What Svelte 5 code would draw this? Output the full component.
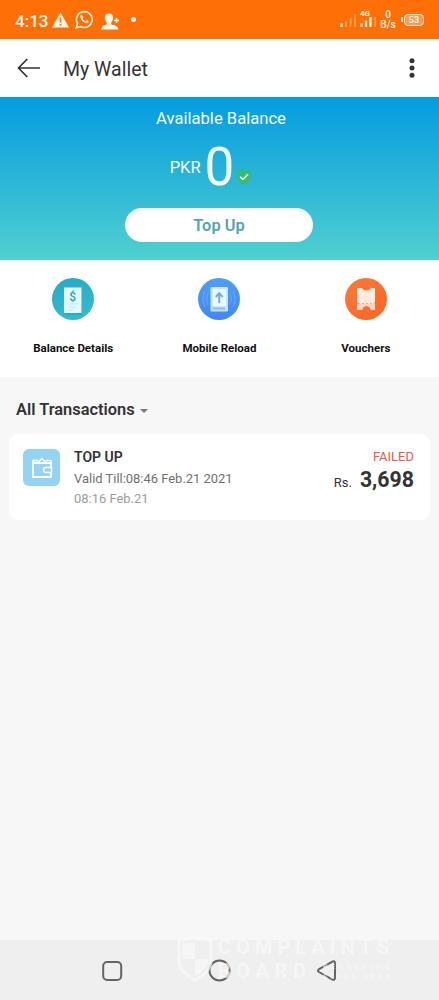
<script>
	const actions = [
	  { id: "balance", label: "Balance Details" },
	  { id: "reload", label: "Mobile Reload" },
	  { id: "vouchers", label: "Vouchers" },
	];

	const transactions = [
	  { title: "TOP UP", valid: "Valid Till:08:46 Feb.21 2021", date: "08:16 Feb.21", status: "FAILED", amount: "3,698" },
	];
</script>

<div class="screen">
  <div class="status">
	<span class="clock">4:13</span>
	<svg class="warn" width="17" height="16" viewBox="0 0 17 16">
	  <path d="M8.5 0.5 17 15.5H0Z" fill="#fff5e6" />
	  <path d="M8.5 5.5v5M8.5 11.8v1.8" stroke="#ff6f08" stroke-width="1.7" />
	</svg>
	<svg class="whatsapp" width="19" height="19" viewBox="0 0 19 19">
	  <path d="M1.2 17.8 2.5 13.5A7.9 7.9 0 1 1 5.6 16.5Z" fill="none" stroke="#fff0dc" stroke-width="1.6" />
	  <path d="M6.6 4.8 5.4 6c-.8 3 3.7 7.7 6.8 7.3l1.7-1.5-2.2-1.7-1.2 1.1c-1.3-.5-2.4-1.6-2.9-2.8l.9-1.2Z" fill="#fff0dc" />
	</svg>
	<svg class="person" width="19" height="17" viewBox="0 0 19 17">
	  <path d="M3.8 4.6C3.8-.9 12.2-.9 12.2 4.6c0 2-.7 3.7-2 5v2c2.600.6 6.800.8 7 4.900H.3c.6-3.900 3.500-4.300 5.500-4.900v-2C4.500 8.300 3.800 6.600 3.800 4.600Z" fill="#fff5e6" />
	  <path d="M15.5 5v5M13 7.5h5" stroke="#fff5e6" stroke-width="1.4" />
	</svg>
	<span class="dot"></span>
	<div class="signals">
	  <svg width="17" height="16" viewBox="0 0 17 16">
		<path d="M1.5 11.5v3.5" stroke="#fff0dc" stroke-width="2.5" />
		<path d="M6 9v6M10.7 6v9M15 2v13" stroke="#ff9d51" stroke-width="1.8" />
	  </svg>
	  <div class="mobile">
		<span class="net">4G</span>
		<svg width="17" height="10" viewBox="0 0 17 10">
		  <path d="M1.5 6.5V10M6 3.5V10M10.5 0V10" stroke="#fff0dc" stroke-width="2.3" />
		  <path d="M15 0v10" stroke="#ff9345" stroke-width="1.8" />
		</svg>
	  </div>
	  <div class="rate"><span>0</span><span>B/s</span></div>
	  <i class="nub"></i>
	  <div class="battery"><span>53</span></div>
	</div>
  </div>

  <header>
	<svg class="back" width="24" height="20" viewBox="0 0 24 20">
	  <path d="M10.3 1 1.5 10l8.8 9M1.5 10H23" fill="none" stroke="#333" stroke-width="1.7" />
	</svg>
	<h1>My Wallet</h1>
	<svg class="more" width="6" height="20" viewBox="0 0 6 20">
	  <circle cx="3" cy="2.7" r="2.5" /><circle cx="3" cy="10" r="2.5" /><circle cx="3" cy="17.3" r="2.5" />
	</svg>
  </header>

  <section class="balance">
	<p class="caption">Available Balance</p>
	<div class="total">
	  <span class="currency">PKR</span>
	  <span class="value">0</span>
	  <svg width="14" height="16" viewBox="0 0 14 16">
		<path d="M7 0.3 13.8 2.5V9c0 3-3 5.2-6.8 6.7C3.2 14.2.2 12 .2 9V2.5Z" fill="#35bd72" />
		<path d="M3 7.8 5.8 10.4 11 5.4" fill="none" stroke="#fff" stroke-width="1.5" />
	  </svg>
	</div>
	<button>Top Up</button>
  </section>

  <nav class="actions">
	{#each actions as action}
	  <div class="action">
		<svg width="42" height="42" viewBox="0 0 42 42">
		  {#if action.id === "balance"}
			<defs><linearGradient id="teal" x1="0" y1="0" x2="0.3" y2="1"><stop stop-color="#24a9c5" /><stop offset="1" stop-color="#35b9ce" /></linearGradient></defs>
			<circle cx="21" cy="21" r="21" fill="url(#teal)" />
			<path d="M13 11h17v26H13Z" fill="#1c9dbb" opacity="0.5" />
			<path d="M12 9.5h17.5V35H12Z" fill="#e5f8fb" />
			<text x="20.7" y="23" text-anchor="middle" font-size="12" font-weight="500" fill="#26a5c0">$</text>
			<path d="M16 26h10M16 29h8M16 32h5" stroke="#c5e7ee" stroke-width="1" />
		  {:else if action.id === "reload"}
			<defs><linearGradient id="blue" x1="0" y1="0" x2="0" y2="1"><stop stop-color="#4ba0f3" /><stop offset="1" stop-color="#4386f5" /></linearGradient></defs>
			<circle cx="21" cy="21" r="21" fill="url(#blue)" />
			<path d="M10 15q-3 6 0 12M7 13q-4 8 0 16M32 15q3 6 0 12M35 13q4 8 0 16" fill="none" stroke="#62adf8" />
			<rect x="12.5" y="9" width="17.5" height="24.5" rx="1" fill="#c5e4fd" />
			<path d="M14.5 11h13.5v17H14.5Z" fill="#edf8ff" />
			<path d="M21.2 25v-9M17.7 19l3.5-3.8 3.5 3.8" fill="none" stroke="#65b4ed" stroke-width="2" />
			<path d="M15 30.5h12" stroke="#89bff5" stroke-width="2" />
		  {:else}
			<defs><linearGradient id="orange" x1="0" y1="0" x2="1" y2="1"><stop stop-color="#fa7a3b" /><stop offset="1" stop-color="#fc6423" /></linearGradient></defs>
			<circle cx="21" cy="21" r="21" fill="url(#orange)" />
			<path d="M12 10h5q1 2.500 4.500 2.500t4.500-2.500h4v14l-1 1 1 1v6h-4q-1-4-4.500-4T17 32h-5v-6l1-1-1-1Z" fill="#ffeadf" />
			<path d="M12 26h18v6h-4q-1-4-4.500-4T17 32h-5Z" fill="#ffd6c3" />
			<path d="M13 25.5h17" stroke="#fba982" stroke-width="1.2" stroke-dasharray="2 2" />
		  {/if}
		</svg>
		<span>{action.label}</span>
	  </div>
	{/each}
  </nav>

  <main>
	<h2>All Transactions <i></i></h2>
	{#each transactions as item}
	  <article>
		<div class="wallet">
		  <svg width="22" height="22" viewBox="0 0 22 22" fill="none" stroke="#fff" stroke-width="1.8">
			<path d="M20 10V6H2v14h18v-4" />
			<path d="M2 6V3.500h5M7 5.500l4-4 4 4M15 3.500h5V6" stroke-width="1.5" />
			<path d="M20.500 10.500H15a2.500 2.500 0 0 0 0 5h5.500Z" stroke-width="1.5" />
		  </svg>
		</div>
		<div class="details">
		  <strong>{item.title}</strong>
		  <span class="valid">{item.valid}</span>
		  <span class="date">{item.date}</span>
		</div>
		<div class="result">
		  <span class="failed">{item.status}</span>
		  <div class="price"><span>Rs.</span><b>{item.amount}</b></div>
		</div>
	  </article>
	{/each}
  </main>

  <footer>
	<svg class="keys" width="439" height="60" viewBox="0 0 439 60" fill="none" stroke="#646464" stroke-width="2">
	  <rect x="103.2" y="22" width="18" height="18" rx="4" />
	  <circle cx="219.5" cy="30.5" r="10" />
	  <path d="M319 29.2 332 21.8q3-1.500 3 1.500v14.500q0 3-3 1.500L319 32q-2-1.400 0-2.800Z" />
	</svg>
	<svg class="mark" width="230" height="62" viewBox="0 -6 230 62">
	  <path d="M2 5q16-6 32 0v20q0 11-16 19Q2 36 2 25Z" fill="none" stroke="#fafafa" stroke-width="3" />
	  <path d="M5 7h13v16H5ZM18 23h13q1 10-13 17Z" fill="#fafafa" />
	  <text x="41" y="18" textLength="171">COMPLAINTS</text>
	  <text x="41" y="42" textLength="88">BOARD</text>
	  <g class="small"><text x="146" y="33" textLength="66">RESOLVING</text><text x="146" y="42.5" textLength="66">SINCE 2004</text></g>
	</svg>
  </footer>
</div>

<style>
	:global(body) {
	  margin: 0;
	}

	.screen {
	  width: 439px;
	  height: 1000px;
	  display: flex;
	  flex-direction: column;
	  background: #f7f7f7;
	  color: #333;
	  font-family: Roboto, sans-serif;
	  overflow: hidden;
	}

	p, h1, h2 {
	  margin: 0;
	}

	svg {
	  display: block;
	  flex-shrink: 0;
	}

	.status {
	  height: 39px;
	  box-sizing: border-box;
	  display: flex;
	  align-items: center;
	  padding: 0 15px;
	  background: #ff6f08;
	  color: #fff5e6;
	}

	.clock {
	  width: 37px;
	  font-size: 17px;
	  font-weight: 500;
	  padding-top: 2px;
	}

	.whatsapp {
	  margin-left: 6px;
	}

	.person {
	  margin: 3px 0 0 7px;
	}

	.dot {
	  width: 5px;
	  height: 5px;
	  margin-left: 11px;
	  border-radius: 50%;
	  background: #fff5e6;
	}

	.signals {
	  margin-left: auto;
	  display: flex;
	  align-items: center;
	}

	.mobile {
	  margin: 0 3px 2px 3px;
	}

	.net {
	  display: block;
	  font-size: 8px;
	  font-weight: 700;
	  line-height: 7px;
	}

	.rate {
	  width: 16px;
	  display: flex;
	  flex-direction: column;
	  align-items: center;
	  padding-top: 1px;
	  font-size: 10px;
	  line-height: 10px;
	  font-weight: 500;
	}

	.nub {
	  width: 2px;
	  height: 5px;
	  margin-left: 5px;
	  background: #fff0dc;
	}

	.battery {
	  width: 18px;
	  height: 10px;
	  margin-left: 1px;
	  border: 1px solid #fff0dc;
	  border-radius: 4px;
	  background: #ff9a50;
	  font-size: 9px;
	  line-height: 11px;
	  font-weight: 700;
	  text-align: center;
	}

	header {
	  height: 58px;
	  box-sizing: border-box;
	  display: flex;
	  align-items: center;
	  padding: 0 24px 0 17px;
	  background: #fff;
	}

	h1 {
	  margin: 3px 0 0 22px;
	  font-size: 19.5px;
	  font-weight: 400;
	  line-height: 24px;
	}

	.more {
	  margin-left: auto;
	  fill: #333;
	}

	.balance {
	  height: 163px;
	  box-sizing: border-box;
	  display: flex;
	  flex-direction: column;
	  align-items: center;
	  padding: 12px 1px 0 0;
	  background: linear-gradient(#059be0, #50d0cf);
	  color: #f5fdff;
	}

	.caption {
	  padding-left: 4px;
	  font-size: 16.6px;
	  line-height: 20px;
	}

	.total {
	  height: 56px;
	  margin: 10px 0 13px;
	  display: flex;
	  align-items: center;
	  padding-right: 17px;
	}

	.currency {
	  font-size: 16.5px;
	}

	.value {
	  margin-left: 4px;
	  font-size: 53px;
	  line-height: 56px;
	}

	.total svg {
	  margin: 20px 0 0 3px;
	}

	button {
	  width: 188px;
	  height: 34px;
	  border: 0;
	  border-radius: 17px;
	  background: #fff;
	  color: #53a5b3;
	  font: 600 16.4px Roboto, sans-serif;
	}

	.actions {
	  height: 117px;
	  display: grid;
	  grid-template-columns: repeat(3, 1fr);
	  background: #fff;
	}

	.action {
	  display: flex;
	  flex-direction: column;
	  align-items: center;
	  padding-top: 18px;
	}

	.action span {
	  margin-top: 21px;
	  color: #111;
	  font-size: 11.5px;
	  font-weight: 700;
	  line-height: 14px;
	}

	main {
	  flex: 1;
	  padding: 21px 9px 0;
	}

	h2 {
	  display: flex;
	  align-items: center;
	  margin: 0 0 12px 7px;
	  font-size: 16.4px;
	  font-weight: 600;
	  line-height: 24px;
	}

	h2 i {
	  margin: 2px 0 0 5px;
	  border: 4px solid transparent;
	  border-top-color: #777;
	  border-bottom: 0;
	}

	article {
	  height: 86px;
	  box-sizing: border-box;
	  display: flex;
	  padding: 14px 16px 0 14px;
	  border-radius: 9px;
	  background: #fff;
	}

	.wallet {
	  width: 37px;
	  height: 37px;
	  display: grid;
	  place-items: center;
	  margin-top: 1px;
	  border-radius: 6px;
	  background: #95d3f3;
	}

	.details {
	  display: flex;
	  flex-direction: column;
	  margin-left: 14px;
	}

	.details strong {
	  font-size: 14px;
	  font-weight: 600;
	  line-height: 19px;
	}

	.valid {
	  margin-top: 1px;
	  color: #707070;
	  font-size: 12.95px;
	  line-height: 22px;
	}

	.date {
	  color: #9c9c9c;
	  font-size: 12.95px;
	  line-height: 17px;
	}

	.result {
	  display: flex;
	  flex-direction: column;
	  align-items: flex-end;
	  margin-left: auto;
	}

	.failed {
	  color: #eb5b3d;
	  font-size: 13px;
	  line-height: 17px;
	}

	.price {
	  display: flex;
	  align-items: baseline;
	  margin-top: 2px;
	  line-height: 26px;
	}

	.price span {
	  margin-right: 8px;
	  font-size: 13px;
	}

	.price b {
	  font-size: 21.3px;
	  font-weight: 700;
	}

	footer {
	  position: relative;
	  height: 60px;
	  background: #efefef;
	}

	.mark {
	  position: absolute;
	  left: 177px;
	  top: -10px;
	  font: 700 20px Roboto, sans-serif;
	  fill: #fafafa;
	  opacity: 0.7;
	}

	.mark .small {
	  font-size: 7px;
	}
</style>
